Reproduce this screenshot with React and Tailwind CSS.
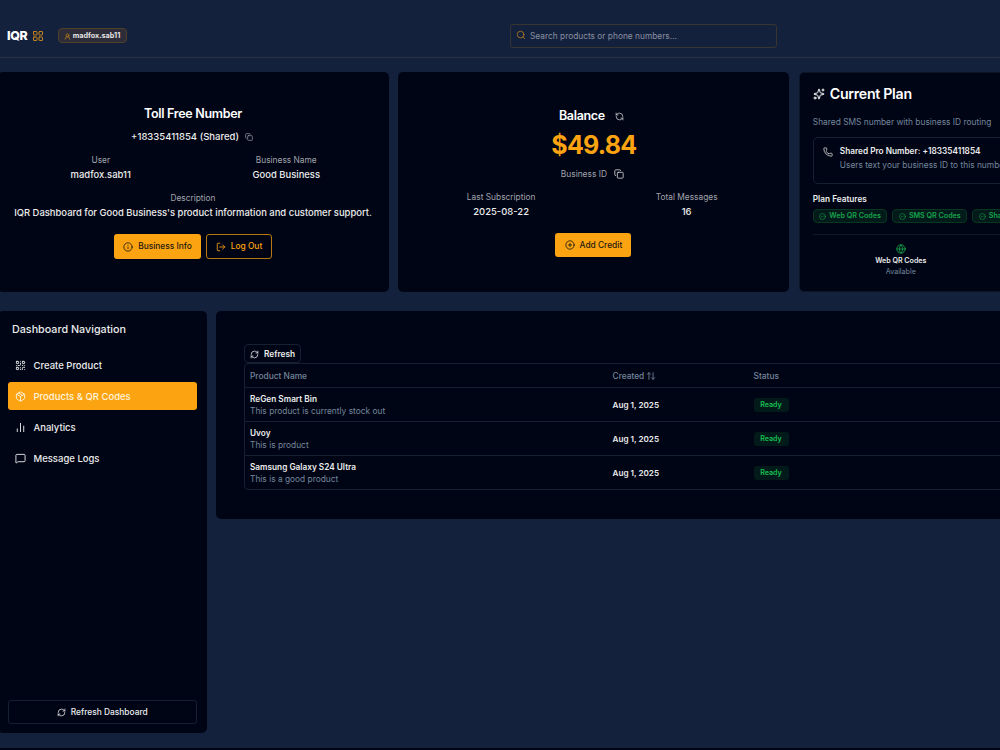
import React, { useState } from 'react';
import {
  ArrowUpDown,
  ChartNoAxesColumn,
  CircleCheck,
  CirclePlus,
  Copy,
  Globe,
  Info,
  LayoutGrid,
  LogOut,
  MessageSquare,
  Package,
  Phone,
  QrCode,
  RefreshCcw,
  RefreshCw,
  Search,
  Sparkles,
  UserRound,
} from 'lucide-react';

const navItems = [
  { id: 'create', label: 'Create Product', icon: QrCode },
  { id: 'products', label: 'Products & QR Codes', icon: Package },
  { id: 'analytics', label: 'Analytics', icon: ChartNoAxesColumn },
  { id: 'logs', label: 'Message Logs', icon: MessageSquare },
];

const products = [
  { name: 'ReGen Smart Bin', description: 'This product is currently stock out', created: 'Aug 1, 2025', status: 'Ready' },
  { name: 'Uvoy', description: 'This is product', created: 'Aug 1, 2025', status: 'Ready' },
  { name: 'Samsung Galaxy S24 Ultra', description: 'This is a good product', created: 'Aug 1, 2025', status: 'Ready' },
];

const features = ['Web QR Codes', 'SMS QR Codes', 'Shared Number'];

const Field = ({ label, value }) => (
  <div className="flex flex-col items-center">
    <span className="text-[8.35px] leading-3 text-[#a1a3ab]">{label}</span>
    <span className="mt-[2px] text-[9.45px] leading-[14px] font-medium text-[#ececec]">{value}</span>
  </div>
);

const Header = () => (
  <header className="flex h-[58px] shrink-0 items-center border-b border-[#2c3140] pt-[14px]">
    <div className="flex w-[508px] items-center pl-[7px]">
      <span className="text-[12.4px] leading-4 font-extrabold tracking-tight text-white">IQR</span>
      <LayoutGrid className="ml-[4px] size-[12px] text-[#c4851c]" />
      <span className="ml-[14px] flex h-[15px] w-[69px] items-center justify-center gap-[2px] rounded-[4px] border border-[#4f4027] bg-[#2c2d39] pt-px text-[7.2px] font-bold text-[#e5e5e5]">
        <UserRound className="size-[7px] text-[#c4851c]" strokeWidth={2.5} />
        madfox.sab11
      </span>
    </div>
    <div className="ml-[2px] flex h-6 w-[267px] items-center rounded-[3px] border border-[#38342f] pl-[5px]">
      <Search className="mb-[2px] size-[10px] text-[#b0781d]" />
      <span className="ml-[4px] pt-px text-[8.35px] text-[#8990a0]">Search products or phone numbers...</span>
    </div>
  </header>
);

const AccountCard = () => (
  <section className="flex h-[220px] flex-col items-center rounded-[5px] bg-[#000515] pt-[32px]">
    <h2 className="mr-px text-[12.5px] leading-5 font-semibold tracking-tight text-white">Toll Free Number</h2>
    <div className="mt-[6px] mr-[3px] flex h-[14px] items-center gap-[6px] text-[9.5px] font-medium text-[#ececec]">
      +18335411854 (Shared)
      <Copy className="size-[8px] text-[#a1a3ab]" />
    </div>
    <div className="mt-[10px] grid w-[371px] grid-cols-2">
      <Field label="User" value="madfox.sab11" />
      <Field label="Business Name" value="Good Business" />
    </div>
    <div className="mt-[10px] mr-px">
      <Field label="Description" value="IQR Dashboard for Good Business's product information and customer support." />
    </div>
    <div className="mt-[14px] mr-px flex gap-[5px] text-[8.4px] font-medium">
      <button className="flex h-[25px] w-[87px] items-center justify-center gap-[5px] rounded-[3px] bg-[#fca311] text-[#1c1a12]">
        <Info className="size-[10px]" />
        Business Info
      </button>
      <button className="flex h-[25px] w-[66px] items-center justify-center gap-[5px] rounded-[3px] border border-[#b9780f] text-[#fca311]">
        <LogOut className="size-[10px]" />
        Log Out
      </button>
    </div>
  </section>
);

const BalanceCard = () => (
  <section className="flex h-[220px] flex-col items-center rounded-[5px] bg-[#000515] pt-[34px]">
    <h2 className="mr-[5px] flex h-5 items-center gap-[10px] text-[12.5px] font-semibold tracking-tight text-white">
      Balance
      <RefreshCcw className="mt-px size-[9px] text-[#d4d4d4]" />
    </h2>
    <p className="mt-[5px] text-[25px] leading-7 font-bold tracking-[-0.03em] text-[#fca311]">$49.84</p>
    <div className="mt-[9px] mr-[3px] flex h-3 items-center gap-[7px] text-[8.4px] text-[#a1a3ab]">
      Business ID
      <Copy className="size-[10px] text-[#d4d4d4]" />
    </div>
    <div className="mt-[11px] grid w-[371px] grid-cols-2">
      <Field label="Last Subscription" value="2025-08-22" />
      <Field label="Total Messages" value="16" />
    </div>
    <button className="mt-[14px] mr-px flex h-[24px] w-[76px] items-center justify-center gap-[5px] rounded-[3px] bg-[#fca311] text-[8.4px] font-medium text-[#1c1a12]">
      <CirclePlus className="size-[10px]" />
      Add Credit
    </button>
  </section>
);

const PlanCard = () => (
  <section className="h-[220px] rounded-[5px] border border-[#0d1626] bg-[#000515] px-[13px] pt-[11px]">
    <h2 className="flex h-5 items-center gap-[5px] text-[14.2px] font-semibold tracking-[-0.3px] text-white">
      <Sparkles className="size-[12px]" />
      Current Plan
    </h2>
    <p className="mt-[12px] text-[8.37px] leading-3 whitespace-nowrap text-[#76859c]">
      Shared SMS number with business ID routing
    </p>
    <div className="mt-[9px] flex h-[47px] rounded-[5px] border border-[#152033] pt-[6px] pl-[9px]">
      <Phone className="mt-[3px] size-[10px] shrink-0 text-[#d4d4d4]" />
      <div className="ml-[7px] whitespace-nowrap">
        <p className="text-[8.25px] leading-[14px] font-semibold text-[#ececec]">Shared Pro Number: +18335411854</p>
        <p className="text-[8.37px] leading-[14px] text-[#76859c]">Users text your business ID to this number</p>
      </div>
    </div>
    <h3 className="mt-[9px] text-[8.25px] leading-3 font-semibold text-[#ececec]">Plan Features</h3>
    <div className="mt-[4px] flex gap-[5px]">
      {features.map((feature) => (
        <span
          key={feature}
          className="flex h-[14px] items-center gap-[3px] rounded-[4px] border border-[#08371f] bg-[#031a1b] px-[5.5px] text-[7.15px] font-semibold whitespace-nowrap text-[#16a34a]"
        >
          <CircleCheck className="size-[7px]" />
          {feature}
        </span>
      ))}
    </div>
    <div className="mt-[11px] mr-[2px] grid grid-cols-2 gap-[9px] border-t border-[#0f1929] pt-[9px]">
      <div className="flex flex-col items-center">
        <Globe className="size-[10px] text-[#16a34a]" />
        <span className="mt-px text-[7.1px] leading-[11px] font-semibold text-[#ececec]">Web QR Codes</span>
        <span className="text-[7.1px] leading-[12px] text-[#76859c]">Available</span>
      </div>
    </div>
  </section>
);

const Sidebar = ({ active, onSelect }) => (
  <aside className="flex h-[422px] w-[208.5px] shrink-0 flex-col rounded-[5px] bg-[#000515] px-[9.5px] pt-[10px] pb-[9px]">
    <h2 className="pt-px pl-[4.5px] text-[10.75px] leading-4 font-medium text-[#ececec]">Dashboard Navigation</h2>
    <nav className="mt-[13px] flex flex-col gap-[3px]">
      {navItems.map(({ id, label, icon: Icon }) => (
        <button
          key={id}
          onClick={() => onSelect(id)}
          className={`flex h-[28px] items-center gap-[8px] rounded-[3px] pl-[7px] text-[9.5px] font-medium ${
            active === id ? 'bg-[#fca311] text-[#fff3dc]' : 'text-[#ececec]'
          }`}
        >
          <Icon className="size-[11px]" />
          <span className="pt-[2px]">{label}</span>
        </button>
      ))}
    </nav>
    <button className="mt-auto flex h-[24px] items-center justify-center gap-[5px] rounded-[3px] border border-[#152033] text-[8.4px] font-medium text-[#ececec]">
      <RefreshCw className="size-[9px]" />
      Refresh Dashboard
    </button>
  </aside>
);

const ProductsTable = () => (
  <section className="h-[208px] w-[960px] shrink-0 rounded-[5px] bg-[#000515] px-[28px] pt-[33px]">
    <button className="flex h-[19px] w-[57px] items-center gap-[5px] rounded-[4px] border border-[#152033] pt-px pl-[5px] text-[8.3px] font-semibold text-[#ececec]">
      <RefreshCw className="size-[9px]" />
      Refresh
    </button>
    <div className="rounded-[4px] border border-[#152033] text-[8.37px]">
      <div className="grid h-[24px] grid-cols-[362.5px_141px_1fr] items-center border-b border-[#152033] pt-px pl-[5px] font-medium text-[#76859c]">
        <span>Product Name</span>
        <span className="flex items-center gap-[2px]">
          Created
          <ArrowUpDown className="size-[10px]" />
        </span>
        <span>Status</span>
      </div>
      {products.map((product) => (
        <div
          key={product.name}
          className="grid h-[34px] grid-cols-[362.5px_141px_1fr] items-center border-b border-[#152033] pl-[5px] last:h-[33px] last:border-b-0"
        >
          <div className="leading-[12px]">
            <p className="text-[8.25px] font-semibold text-[#ececec]">{product.name}</p>
            <p className="text-[#76859c]">{product.description}</p>
          </div>
          <span className="pt-px text-[8.15px] font-semibold text-[#ececec]">{product.created}</span>
          <span className="flex h-[14px] w-[35px] items-center justify-center rounded-[3px] bg-[#031a1b] pt-px text-[7.1px] font-semibold text-[#16c050]">
            {product.status}
          </span>
        </div>
      ))}
    </div>
  </section>
);

const Dashboard = () => {
  const [active, setActive] = useState('products');

  return (
    <div className="h-[750px] w-[1000px] overflow-hidden border-b-2 border-[#000515] bg-[#14213d] font-['Inter',sans-serif]">
      <Header />
      <main className="-ml-[2px] pt-[14px]">
        <div className="grid w-[1192px] grid-cols-[391px_391px_391px] gap-x-[9.4px]">
          <AccountCard />
          <BalanceCard />
          <PlanCard />
        </div>
        <div className="mt-[19px] flex items-start gap-[9.5px]">
          <Sidebar active={active} onSelect={setActive} />
          <ProductsTable />
        </div>
      </main>
    </div>
  );
};

export default Dashboard;
